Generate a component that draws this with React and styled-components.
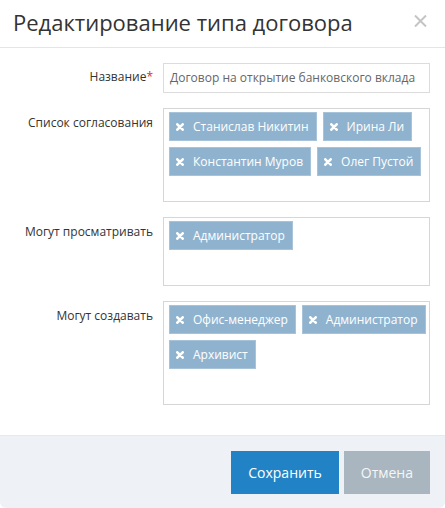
import React from "react";
import styled, { createGlobalStyle } from "styled-components";

const Global = createGlobalStyle`
  html, body { margin: 0; padding: 0; background: #ffffff; }
  body { font-family: "Open Sans", "Noto Sans", sans-serif; color: #333; }
  * { box-sizing: border-box; }
`;

const Modal = styled.div`
  width: 445px;
  height: 508px;
  display: flex;
  flex-direction: column;
  background: #fff;
  border-radius: 6px;
  overflow: hidden;
`;

const Header = styled.div`
  height: 48px;
  flex: none;
  display: flex;
  align-items: center;
  justify-content: space-between;
  padding: 0 18px 0 13px;
  border-bottom: 1px solid #e5e5e5;
`;

const Title = styled.h4`
  margin: 0;
  font-size: 22px;
  font-weight: 400;
  color: #333;
  line-height: 30px;
  padding-bottom: 3px;
`;

const Close = styled.button`
  border: 0;
  background: none;
  padding: 0;
  margin-bottom: 6px;
  display: flex;
  cursor: pointer;
`;

const Body = styled.div`
  flex: 1;
  padding: 15px 15px 0 15px;
  display: flex;
  flex-direction: column;
  gap: 15px;
`;

const Row = styled.div`
  display: grid;
  grid-template-columns: 138px 267px;
  column-gap: 10px;
  align-items: start;
`;

const Label = styled.label`
  text-align: right;
  font-size: 12px;
  line-height: 17px;
  padding-top: ${(p) => p.$pt || 6}px;
  color: #333;
  white-space: nowrap;
`;

const Req = styled.span`
  color: #e02a2a;
`;

const Input = styled.div`
  height: 30px;
  border: 1px solid #dcdcdc;
  padding: 0 6px;
  font-size: 12px;
  line-height: 28px;
  color: #666;
  white-space: nowrap;
  overflow: hidden;
`;

const TagBox = styled.div`
  height: ${(p) => p.$h}px;
  border: 1px solid #d6d6d6;
  padding: 3px 0 3px 5px;
  display: flex;
  flex-wrap: wrap;
  align-content: flex-start;
  gap: 6px;
`;

const Tag = styled.span`
  height: 29px;
  display: inline-flex;
  align-items: center;
  gap: 9px;
  padding: 0 7px 0 6px;
  background: #8fb3cf;
  border: 1px solid #a6c3da;
  color: #fff;
  font-size: 12px;
  white-space: nowrap;
`;

const Footer = styled.div`
  height: 73px;
  flex: none;
  background: #eef1f5;
  border-top: 1px solid #e5e8ec;
  display: flex;
  justify-content: flex-end;
  align-items: center;
  gap: 5px;
  padding: 0 15px;
`;

const Button = styled.button`
  height: 43px;
  border: 0;
  padding: 0 17px;
  font-family: "Open Sans", "Noto Sans", sans-serif;
  font-size: 14px;
  color: ${(p) => (p.$primary ? "#fff" : "#f4f6f8")};
  background: ${(p) => (p.$primary ? "#2183c5" : "#aab6bf")};
  cursor: pointer;
`;

const XIcon = () => (
  <svg width="8" height="8" viewBox="0 0 8 8">
    <path d="M1.3 1.3L6.7 6.7M6.7 1.3L1.3 6.7" stroke="#fff" strokeWidth="2.6" strokeLinecap="round" />
  </svg>
);

const CloseIcon = () => (
  <svg width="13" height="12" viewBox="0 0 13 12">
    <path d="M1 0.5L12 11.5M12 0.5L1 11.5" stroke="#c4c4c4" strokeWidth="2" />
  </svg>
);

const groups = [
  { label: "Список согласования", h: 94, tags: ["Станислав Никитин", "Ирина Ли", "Константин Муров", "Олег Пустой"] },
  { label: "Могут просматривать", h: 69, tags: ["Администратор"] },
  { label: "Могут создавать", h: 104, tags: ["Офис-менеджер", "Администратор", "Архивист"] },
];

export default function App() {
  return (
    <>
      <Global />
      <Modal>
        <Header>
          <Title>Редактирование типа договора</Title>
          <Close aria-label="Закрыть"><CloseIcon /></Close>
        </Header>
        <Body>
          <Row>
            <Label $pt={5}>Название<Req>*</Req></Label>
            <Input>Договор на открытие банковского вклада</Input>
          </Row>
          {groups.map((g) => (
            <Row key={g.label}>
              <Label>{g.label}</Label>
              <TagBox $h={g.h}>
                {g.tags.map((t) => (
                  <Tag key={t}><XIcon />{t}</Tag>
                ))}
              </TagBox>
            </Row>
          ))}
        </Body>
        <Footer>
          <Button $primary>Сохранить</Button>
          <Button>Отмена</Button>
        </Footer>
      </Modal>
    </>
  );
}
